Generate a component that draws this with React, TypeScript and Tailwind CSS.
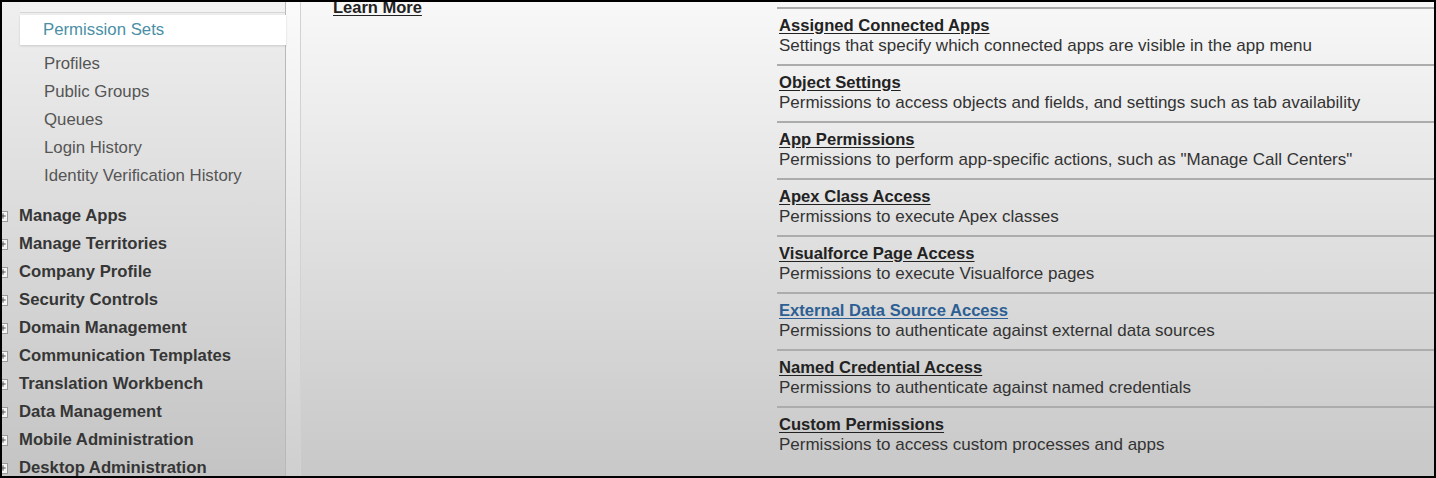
import { Plus } from "lucide-react";

const subItems = [
  "Profiles",
  "Public Groups",
  "Queues",
  "Login History",
  "Identity Verification History",
];

const groups = [
  "Manage Apps",
  "Manage Territories",
  "Company Profile",
  "Security Controls",
  "Domain Management",
  "Communication Templates",
  "Translation Workbench",
  "Data Management",
  "Mobile Administration",
  "Desktop Administration",
];

const settings = [
  {
    title: "Assigned Connected Apps",
    desc: "Settings that specify which connected apps are visible in the app menu",
  },
  {
    title: "Object Settings",
    desc: "Permissions to access objects and fields, and settings such as tab availability",
  },
  {
    title: "App Permissions",
    desc: 'Permissions to perform app-specific actions, such as "Manage Call Centers"',
  },
  { title: "Apex Class Access", desc: "Permissions to execute Apex classes" },
  { title: "Visualforce Page Access", desc: "Permissions to execute Visualforce pages" },
  {
    title: "External Data Source Access",
    desc: "Permissions to authenticate against external data sources",
    active: true,
  },
  {
    title: "Named Credential Access",
    desc: "Permissions to authenticate against named credentials",
  },
  { title: "Custom Permissions", desc: "Permissions to access custom processes and apps" },
];

const App = () => {
  return (
    <div className="h-[478px] w-[1436px] overflow-hidden border-2 border-black flex font-['Liberation_Sans',Arial,sans-serif]">
      {/* sidebar */}
      <div className="w-[284px] shrink-0 border-r border-[#b9b9b9] bg-gradient-to-b from-[#efefef] to-[#c4c4c4]">
        <div className="ml-[18px] h-[11px] border-b border-[#d6d6d6] bg-[#f2f2f2]" />
        <div className="relative z-10 ml-[18px] -mr-px mt-[2px] h-[30px] bg-white shadow-[0_1px_2px_rgba(0,0,0,0.15)] flex items-center pl-[23px] text-[16.8px] text-[#4a8fa6]">
          Permission Sets
        </div>
        <ul className="mt-[5px] pl-[42px]">
          {subItems.map((s) => (
            <li key={s} className="h-[28px] leading-[28px] text-[16.8px] text-[#555]">
              {s}
            </li>
          ))}
        </ul>
        <ul className="mt-[12px]">
          {groups.map((g) => (
            <li key={g} className="h-[28px] flex items-center">
              <span className="-ml-[5px] w-[11px] h-[11px] border border-[#9a9a9a] bg-[#f4f4f4] flex items-center justify-end">
                <Plus className="w-[8px] h-[8px] text-[#555]" strokeWidth={3} />
              </span>
              <span className="ml-[11px] text-[16.7px] font-bold text-[#363636]">{g}</span>
            </li>
          ))}
        </ul>
      </div>

      {/* gutter */}
      <div className="w-[15px] shrink-0 border-r border-[#d2d2d2] bg-gradient-to-b from-[#fbfbfb] to-[#cfcfcf]" />

      {/* main */}
      <div className="flex-1 flex bg-gradient-to-b from-[#f8f8f8] to-[#c8c8c8]">
        <div className="w-[476px] shrink-0 pl-[32px]">
          <a className="block -mt-[5px] leading-[20px] text-[16.5px] font-bold text-[#222] underline underline-offset-2">
            Learn More
          </a>
        </div>
        <div className="flex-1 mt-[5px]">
          {settings.map((s) => (
            <div key={s.title} className="border-t-2 border-[#acacac] pt-[7px] pb-[8px] pl-[2px]">
              <div
                className={
                  s.active
                    ? "leading-[20px] text-[16.6px] font-bold underline underline-offset-2 text-[#2c5f94]"
                    : "leading-[20px] text-[16.6px] font-bold underline underline-offset-2 text-[#222]"
                }
              >
                {s.title}
              </div>
              <div className="leading-[20px] text-[17px] text-[#333]">{s.desc}</div>
            </div>
          ))}
        </div>
      </div>
    </div>
  );
};

export default App;
